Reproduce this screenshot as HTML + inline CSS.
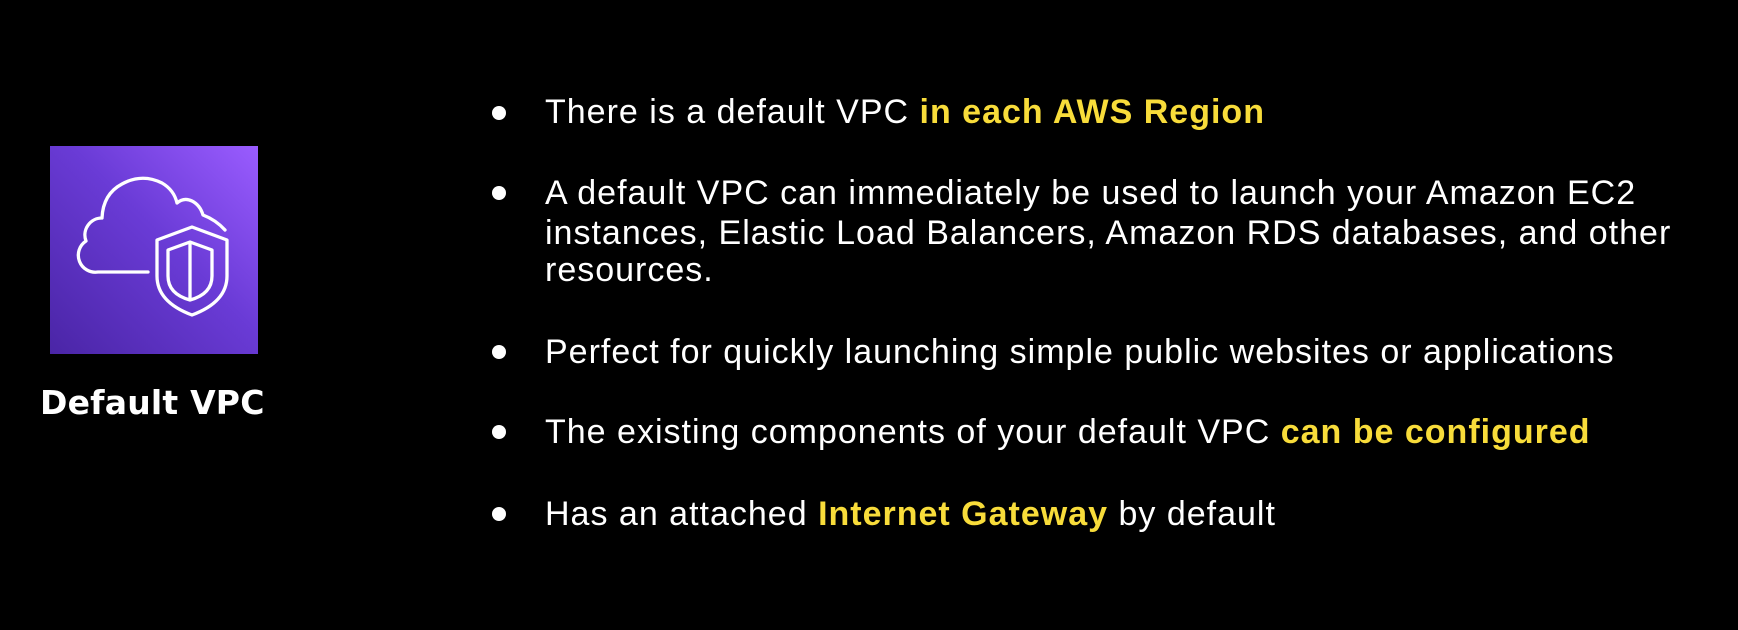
<!DOCTYPE html><html><head><meta charset="utf-8"><style>
body{margin:0;width:1738px;height:630px;background:#000;overflow:hidden;position:relative;font-family:"Liberation Sans","DejaVu Sans",sans-serif;color:#fff}
.icon{position:absolute;left:50px;top:146px;width:208px;height:208px;background:linear-gradient(45deg,#4a25a6 0%,#6a3bd6 55%,#9a5cff 100%)}
.title{position:absolute;left:40px;top:383px;font-family:"DejaVu Sans",sans-serif;font-weight:bold;font-size:33px;letter-spacing:0.2px}
.l{position:absolute;left:545px;font-size:34px;line-height:40px;white-space:nowrap;letter-spacing:1px}
.b{position:absolute;left:492px;width:14px;height:14px;border-radius:50%;background:#fff}
.y{color:#f8dc3a;font-weight:bold}
</style></head><body>
<div class="icon"><svg width="208" height="208" viewBox="0 0 208 208" fill="none" stroke="#fff" stroke-width="3.3" stroke-linejoin="round" stroke-linecap="round">
<path d="M98 126 H48 A17 17 0 0 1 36 95 A17 17 0 0 1 52 72 Q53 48 72 38 Q92 27 112 37 Q124 44 127 57 Q134 51 142 55 Q150 59 153 69 Q166 74 175 84"/>
<path d="M142 81 L107 94 V130 Q107 156 142 169 Q177 156 177 130 V94 Z"/>
<path d="M140 96 L118 104 V130 Q118 148 140 154 Q162 148 162 130 V104 Z"/>
<path d="M140 97 V153"/>
</svg></div>
<div class="title">Default VPC</div>
<div class="b" style="top:106px"></div><div class="l" style="top:92px">There is a default VPC <span class="y">in each AWS Region</span></div>
<div class="b" style="top:186px"></div>
<div class="l" style="top:173px">A default VPC can immediately be used to launch your Amazon EC2</div>
<div class="l" style="top:213px">instances, Elastic Load Balancers, Amazon RDS databases, and other</div>
<div class="l" style="top:250px">resources.</div>
<div class="b" style="top:345px"></div><div class="l" style="top:332px">Perfect for quickly launching simple public websites or applications</div>
<div class="b" style="top:425px"></div><div class="l" style="top:412px">The existing components of your default VPC <span class="y">can be configured</span></div>
<div class="b" style="top:507px"></div><div class="l" style="top:494px">Has an attached <span class="y">Internet Gateway</span> by default</div>
</body></html>
